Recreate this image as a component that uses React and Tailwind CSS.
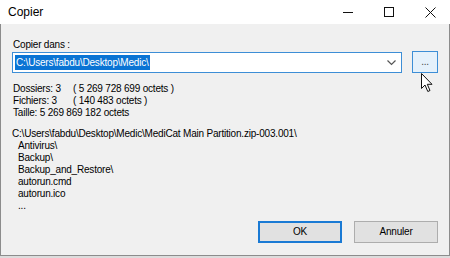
import { useState } from "react";

const font = { fontFamily: '"Liberation Sans", Arial, sans-serif' };

function TitleBar() {
  return (
    <div className="h-[24px] bg-white flex items-center">
      <span className="ml-[8px] text-[12px] text-black">Copier</span>
      <div className="ml-auto flex items-center h-full">
        <div className="w-[40px] h-full flex items-center justify-center">
          <svg width="10" height="10" viewBox="0 0 10 10"><path d="M0 5.5h10" stroke="#111" strokeWidth="1" /></svg>
        </div>
        <div className="w-[42px] h-full flex items-center justify-center">
          <svg width="10" height="10" viewBox="0 0 10 10"><rect x="0.5" y="0.5" width="9" height="9" fill="none" stroke="#111" strokeWidth="1" /></svg>
        </div>
        <div className="w-[40px] h-full flex items-center justify-center">
          <svg width="11" height="11" viewBox="0 0 11 11"><path d="M0.5 0.5l10 10M10.5 0.5l-10 10" stroke="#111" strokeWidth="1" /></svg>
        </div>
      </div>
    </div>
  );
}

function Cursor() {
  return (
    <svg className="absolute left-[421px] top-[73px]" width="13" height="20" viewBox="0 0 13 20">
      <path d="M0.5 0.5 L0.5 15.5 L4 12 L6.8 18.5 L9 17.5 L6.3 11.3 L11 11.3 Z" fill="#fff" stroke="#111" strokeWidth="1" />
    </svg>
  );
}

export default function App() {
  const [path] = useState("C:\\Users\\fabdu\\Desktop\\Medic\\");
  const files = ["Antivirus\\", "Backup\\", "Backup_and_Restore\\", "autorun.cmd", "autorun.ico", "..."];

  return (
    <div className="w-[450px] h-[258px] bg-[#dcdcdc] relative overflow-hidden" style={font}>
      <TitleBar />
      <div className="h-[232px] bg-[#f0f0f0] border-l border-r border-b border-[#8c8c8c] pl-[11px] pr-[11px] text-[10px] leading-[12px] tracking-[-0.2px] text-black">
        <div className="pt-[15px] h-[27px] pl-[1px]">Copier dans :</div>
        <div className="flex items-start">
          <div className="w-[391px] h-[21px] mt-[1px] bg-white border border-[#3d8ed6] flex items-center pl-[2px] pr-[5px]">
            <span className="bg-[#0a74d4] text-white px-[1px] leading-[15px]">{path}</span>
            <svg className="ml-auto" width="9" height="6" viewBox="0 0 9 6"><path d="M0.5 0.5l4 4 4-4" fill="none" stroke="#555" strokeWidth="1.2" /></svg>
          </div>
          <div className="ml-[10px] w-[26px] h-[22px] bg-[#e5f1fb] border border-[#3d8ed6] flex items-center justify-center text-[10px] text-[#444]">
            ...
          </div>
        </div>
        <div className="mt-[10px] pl-[1px]">
          <div className="flex"><span className="w-[60px]">Dossiers: 3</span><span>( 5 269 728 699 octets )</span></div>
          <div className="flex"><span className="w-[60px]">Fichiers: 3</span><span>( 140 483 octets )</span></div>
          <div>Taille: 5 269 869 182 octets</div>
        </div>
        <div className="mt-[9px]">
          <div>C:\Users\fabdu\Desktop\Medic\MediCat Main Partition.zip-003.001\</div>
          <div className="pl-[6px]">
            {files.map((f) => (
              <div key={f}>{f}</div>
            ))}
          </div>
        </div>
        <div className="flex justify-end mt-[9px] gap-[12px]">
          <button className="w-[84px] h-[22px] bg-[#e1e1e1] border-2 border-[#1a7ad4] text-[10px] text-black">OK</button>
          <button className="w-[84px] h-[22px] bg-[#e1e1e1] border border-[#adadad] text-[10px] text-black">Annuler</button>
        </div>
      </div>
      <Cursor />
    </div>
  );
}
